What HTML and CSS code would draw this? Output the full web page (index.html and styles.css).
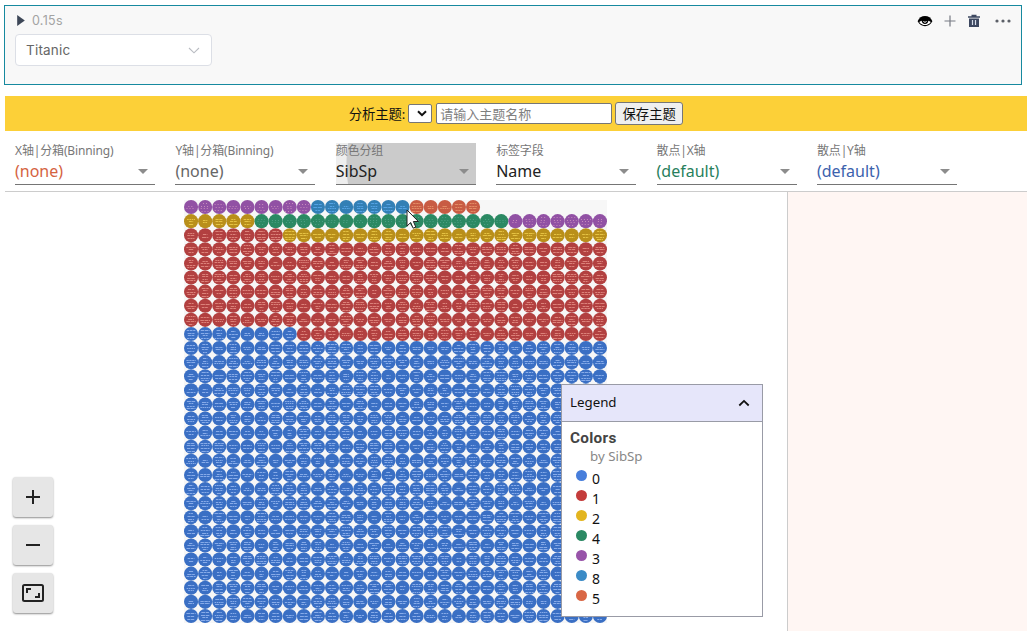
FILE: index.html
```html
<!DOCTYPE html>
<html lang="zh-CN">
<head>
<meta charset="utf-8">
<title>Titanic</title>
<link rel="stylesheet" href="styles.css">
</head>
<body>
<section class="cell">
  <div class="cell-head">
    <svg class="play" width="8" height="11" viewBox="0 0 8 11"><path d="M0.200 0v11L7.800 5.500z" fill="#3d4757"/></svg>
    <span class="time">0.15s</span>
    <div class="tools">
      <svg width="16" height="12" viewBox="0 0 16 12"><path d="M.6 6.300C2 2.800 4.600 1 8 1s6 1.800 7.400 5.300C13.400 9.600 11 11.200 8 11.200S2.600 9.600.6 6.300z" fill="#000"/><path d="M2.200 7C3.700 6 5.500 5.600 8 5.600s4.300.4 5.800 1.400C12.200 9.200 10.300 10.100 8 10.100S3.800 9.200 2.200 7z" fill="#fff"/><path d="M4.600 5c0 2.800 1.400 4 3.400 4s3.400-1.200 3.400-4z" fill="#000"/><path d="M6.400 6.300c.4 1.200 2.800 1.200 3.200 0" stroke="#fff" fill="none"/></svg>
      <svg width="12" height="12" viewBox="0 0 12 12"><path d="M6 .5v11M.5 6h11" stroke="#777b84" stroke-width="1.200"/></svg>
      <svg width="12" height="14" viewBox="0 0 12 14"><path d="M0 2.200h3.500V.7h5v1.500H12v1.600H0zM1 4.500h10V13H1z" fill="#3d4860"/><path d="M4.500 6v5M7.500 6v5" stroke="#d7deea" stroke-width="1.200"/></svg>
      <svg width="16" height="4" viewBox="0 0 16 4"><g fill="#5c6068"><circle cx="2" cy="2" r="1.600"/><circle cx="8" cy="2" r="1.600"/><circle cx="14" cy="2" r="1.600"/></g></svg>
    </div>
  </div>
  <div class="dataset"><span>Titanic</span><svg width="12" height="7" viewBox="0 0 12 7"><path d="M1 1l5 4.800L11 1" fill="none" stroke="#b9bcc2" stroke-width="1.100"/></svg></div>
</section>

<form class="theme-bar">
  <label class="theme-label">分析主题:</label>
  <div class="theme-select"><svg width="10" height="7" viewBox="0 0 10 7"><path d="M1 1.200l4 4 4-4" fill="none" stroke="#111" stroke-width="2"/></svg></div>
  <input class="theme-name" type="text" placeholder="请输入主题名称">
  <button class="theme-save" type="button">保存主题</button>
</form>

<nav class="fields">
  <div class="field"><span class="caption">X轴|分箱(Binning)</span><div class="value orange">(none)<i class="arrow"></i></div></div>
  <div class="field"><span class="caption">Y轴|分箱(Binning)</span><div class="value gray">(none)<i class="arrow"></i></div></div>
  <div class="field active"><span class="caption">颜色分组</span><div class="value">SibSp<i class="arrow"></i></div></div>
  <div class="field"><span class="caption">标签字段</span><div class="value">Name<i class="arrow"></i></div></div>
  <div class="field"><span class="caption">散点|X轴</span><div class="value green">(default)<i class="arrow"></i></div></div>
  <div class="field"><span class="caption">散点|Y轴</span><div class="value blue">(default)<i class="arrow"></i></div></div>
</nav>

<main class="work">
  <div class="plot">
    <svg id="units" class="units" width="423" height="423" viewBox="0 0 423 423"></svg>
    <div class="zoom">
      <button class="zoom-btn"><svg width="24" height="24" viewBox="0 0 24 24"><path d="M12 5v14M5 12h14" stroke="#222" stroke-width="2"/></svg></button>
      <button class="zoom-btn"><svg width="24" height="24" viewBox="0 0 24 24"><path d="M5 12h14" stroke="#222" stroke-width="2"/></svg></button>
      <button class="zoom-btn"><svg width="24" height="24" viewBox="0 0 24 24" fill="none" stroke="#222" stroke-width="2"><rect x="2" y="4" width="20" height="16" rx="1.500"/><path d="M6 12V8h4M18 12v4h-4"/></svg></button>
    </div>
    <aside class="legend">
      <header class="legend-head"><span>Legend</span><svg width="12" height="8" viewBox="0 0 12 8"><path d="M1.300 6.500L6 1.900l4.700 4.600" fill="none" stroke="#111" stroke-width="1.800"/></svg></header>
      <div class="legend-body">
        <h2 class="legend-title">Colors</h2>
        <div class="legend-by">by SibSp</div>
        <ul class="keys">
          <li><i class="dot c0"></i>0</li>
          <li><i class="dot c1"></i>1</li>
          <li><i class="dot c2"></i>2</li>
          <li><i class="dot c4"></i>4</li>
          <li><i class="dot c3"></i>3</li>
          <li><i class="dot c8"></i>8</li>
          <li><i class="dot c5"></i>5</li>
        </ul>
      </div>
    </aside>
    <svg class="cursor" width="14" height="21" viewBox="0 0 14 21"><path d="M1 1v16l3.700-3.500 2.400 5.700 2.700-1.200-2.400-5.500h5z" fill="#fff" stroke="#222"/></svg>
  </div>
  <div class="details"></div>
</main>
<script src="units.js"></script>
</body>
</html>
```
FILE: styles.css
```css
* { box-sizing: border-box; }
body {
  margin: 0;
  padding: 5px 7px 5px 4px;
  height: 636px;
  overflow: hidden;
  display: flex;
  flex-direction: column;
  background: #fff;
  color: #222;
  font-family: "Noto Sans", "Noto Sans CJK SC", sans-serif;
}
svg { display: block; flex: none; }

.cell {
  height: 80px;
  flex: none;
  margin-right: 5px;
  padding: 8px 10px 0;
  border: 1px solid #16899f;
  background: #f8f8f8;
  font-family: Inter, "Liberation Sans", sans-serif;
}
.cell-head { display: flex; align-items: center; height: 13px; padding-left: 2px; }
.time { margin-left: 7px; font-size: 12.5px; letter-spacing: .3px; color: #a3a3a3; }
.tools { display: flex; align-items: center; gap: 12px; margin-left: auto; }
.tools svg:first-child { margin-right: -1px; }
.tools svg:last-child { margin-left: 3px; }
.dataset {
  display: flex;
  align-items: center;
  justify-content: space-between;
  width: 197px;
  height: 32px;
  margin-top: 7px;
  padding: 0 11px 0 10px;
  border: 1px solid #dcdfe6;
  border-radius: 4px;
  background: #fff;
  color: #666;
  font-size: 13.5px;
  letter-spacing: .2px;
}

.theme-bar {
  display: flex;
  justify-content: center;
  align-items: center;
  height: 35px;
  flex: none;
  margin: 11px 0 0 1px;
  background: #fcd038;
  font-size: 13.33px;
  color: #111;
}
.theme-label { margin-right: 3px; letter-spacing: -.1px; }
.theme-select {
  display: flex;
  align-items: center;
  justify-content: flex-end;
  width: 24px;
  height: 19px;
  padding-right: 4px;
  border: 1px solid #767676;
  border-radius: 2px;
  background: #fff;
}
.theme-name {
  width: 176px;
  height: 21px;
  margin: 0 3px 0 4px;
  padding: 0 3px;
  border: 1px solid #767676;
  border-radius: 2px;
  font: 13px "Noto Sans", "Noto Sans CJK SC", sans-serif;
}
.theme-name::placeholder { color: #808080; }
.theme-save {
  width: 68px;
  height: 23px;
  padding: 0;
  border: 1px solid #767676;
  border-radius: 3px;
  background: #efefef;
  color: #111;
  font: 13.33px/20px "Noto Sans", "Noto Sans CJK SC", sans-serif;
}

.fields {
  display: flex;
  gap: 20.4px;
  height: 61px;
  flex: none;
  margin-left: 1px;
  padding: 12px 10px 0;
  border-bottom: 1px solid #ccc;
}
.field { width: 140px; height: 42px; border-bottom: 1px solid #757575; }
.field.active { background: radial-gradient(circle at 140px 21px, #cbcbcb 129px, #eee 130px); }
.caption { display: block; height: 16px; line-height: 15px; font-size: 12px; letter-spacing: -.15px; color: #777; white-space: nowrap; }
.value {
  display: flex;
  align-items: center;
  justify-content: space-between;
  height: 24px;
  padding-right: 7px;
  font-size: 16px;
  line-height: 24px;
}
.arrow { border: 5px solid transparent; border-top-color: #8c8c8c; border-bottom: 0; }
.orange { color: #d5633f; }
.gray { color: #666; }
.green { color: #287f5d; }
.blue { color: #3c62ad; }

.work { display: flex; flex: 1; min-height: 0; margin-left: 1px; }
.plot { position: relative; width: 783px; flex: none; padding: 8px 0 0 179px; border-right: 1px solid #ccc; }
.details { flex: 1; background: #fff6f3; }
.units { background: #f7f7f7; }

.zoom { position: absolute; left: 8px; bottom: 18px; display: flex; flex-direction: column; gap: 8px; }
.zoom-btn {
  display: grid;
  place-items: center;
  width: 40px;
  height: 40px;
  padding: 0;
  border: 0;
  border-radius: 3px;
  background: #e6e6e6;
  box-shadow: 0 1px 2px rgba(0, 0, 0, .45);
}

.legend {
  position: absolute;
  left: 556px;
  top: 192px;
  width: 202px;
  height: 233px;
  border: 1px solid #999ba6;
  background: #fff;
}
.legend-head {
  display: flex;
  align-items: center;
  justify-content: space-between;
  height: 37px;
  padding: 0 12px 0 8px;
  border-bottom: 1px solid #999ba6;
  background: #e6e6fa;
  color: #111;
  font-size: 13.3px;
}
.legend-head span { padding-bottom: 2px; }
.legend-body { padding: 6px 8px; }
.legend-title { margin: 0; font: bold 15.3px/20px Roboto, sans-serif; letter-spacing: .3px; color: #444; }
.legend-by { height: 20px; padding-left: 20px; font-size: 13.3px; line-height: 17px; color: #888; }
.keys { margin: 0; padding: 0 0 0 6px; list-style: none; }
.keys li { display: flex; gap: 5px; height: 20px; font-size: 14px; line-height: 21px; color: #111; }
.dot { width: 11px; height: 11px; margin-top: 2px; border-radius: 50%; }
.c0 { background: #477edb; }
.c1 { background: #c43c3b; }
.c2 { background: #e3b51f; }
.c4 { background: #2b8963; }
.c3 { background: #9854a9; }
.c8 { background: #3b8bc6; }
.c5 { background: #d96745; }

.cursor { position: absolute; left: 401px; top: 17px; }
```
FILE: units.js
```js
// Unit chart: one disc per passenger, filled from the bottom row up by SibSp.
const pitch = 14.1;
const colors = {
  0: ['#3a6fc4', '#b4cfff'], 1: ['#b24040', '#f5a89c'], 2: ['#b98f1a', '#ffe05b'],
  4: ['#2b8963', '#65ae9c'], 3: ['#9151a4', '#e8b0cc'], 8: ['#327fb5', '#69b7ff'],
  5: ['#c85b43', '#f3a878']
};
// [group, count] runs for the mixed rows, top to bottom
const mixed = [
  [[3, 9], [8, 7], [5, 5]],
  [[2, 5], [4, 18], [3, 7]],
  [[1, 7], [2, 23]]
];
let seed = 17;
const rand = () => (seed = (seed * 16807) % 2147483647) / 2147483647;

let out = '';
for (let row = 0; row < 30; row++) {
  const runs = mixed[row] || (row < 9 ? [[1, 30]] : row === 9 ? [[0, 8], [1, 22]] : [[0, 30]]);
  let col = 0;
  for (const [group, count] of runs) {
    const [fill, ink] = colors[group];
    const sparse = group === 3 || group === 4;
    for (let i = 0; i < count; i++, col++) {
      const x = (col + 0.5) * pitch, y = (row + 0.5) * pitch;
      out += `<circle cx="${x}" cy="${y}" r="7.05" fill="${fill}"/>`;
      const lines = 2 + Math.floor(rand() * 3);
      for (let k = 0; k < lines; k++) {
        const w = 4 + rand() * 6;
        const ly = Math.round(y + (k - (lines - 1) / 2) * 2.6) + 0.5;
        const dash = sparse ? '1 2' : `${(1.5 + rand() * 3).toFixed(1)} .6`;
        out += `<path d="M${x - w / 2} ${ly}h${w}" stroke="${ink}" stroke-width=".9" stroke-dasharray="${dash}" opacity=".7"/>`;
      }
    }
  }
}
document.getElementById('units').innerHTML = out;
```
